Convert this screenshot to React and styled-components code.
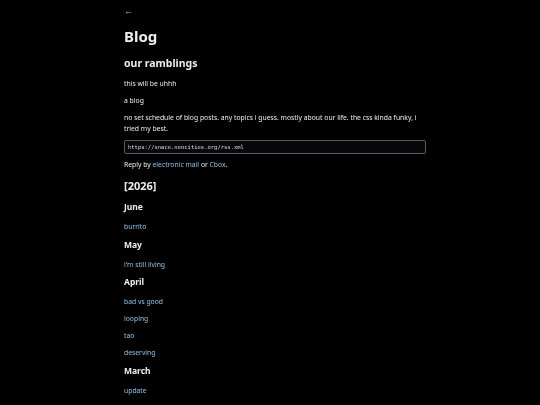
import React from "react";
import styled, { createGlobalStyle } from "styled-components";

const GlobalStyle = createGlobalStyle`
  html, body {
    margin: 0;
    padding: 0;
    background: #000;
  }
  body {
    font-family: "Noto Sans", sans-serif;
    color: #ededed;
    -webkit-font-smoothing: antialiased;
  }
`;

const posts = [
  { month: "June", items: ["burrito"] },
  { month: "May", items: ["i'm still living"] },
  { month: "April", items: ["bad vs good", "looping", "tao", "deserving"] },
  { month: "March", items: ["update"] },
];

const StyledPage = styled.main`
  width: 302px;
  margin: 0 auto;
  padding: 5px 0 0 9px;
  font-size: 6.8px;
  line-height: 11px;
  will-change: transform;
`;

const Link = styled.a`
  color: #8cc3e8;
  text-decoration: none;
`;

const Back = styled(Link)`
  display: block;
  font-size: 9px;
  line-height: 12px;
  margin-bottom: 9px;
`;

const Title = styled.h1`
  margin: 0 0 10px;
  font-size: 15px;
  line-height: 20px;
  font-weight: 700;
`;

const Subtitle = styled.h2`
  margin: 0 0 8px;
  font-size: 10.5px;
  line-height: 14px;
  font-weight: 700;
`;

const Para = styled.p`
  margin: 0 0 6px;
`;

const Feed = styled.input`
  display: block;
  box-sizing: border-box;
  width: 302px;
  height: 14px;
  margin: 4px 0 5px;
  padding: 0 3px;
  background: #070809;
  border: 1px solid #505b67;
  border-radius: 2px;
  color: #dcdcdc;
  font-family: "DejaVu Sans Mono", monospace;
  font-size: 5.5px;
  outline: none;
`;

const Year = styled.h2`
  margin: 9px 0 8px;
  font-size: 11px;
  line-height: 14px;
  font-weight: 700;
`;

const Month = styled.h3`
  margin: 0 0 8px;
  font-size: 8.5px;
  line-height: 12px;
  font-weight: 700;
`;

const PostList = styled.ul`
  list-style: none;
  margin: 0 0 6.5px;
  padding: 0;

  li {
    margin-bottom: 6px;
  }
`;

const App = () => (
  <>
    <GlobalStyle />
    <StyledPage>
      <Back href="#">←</Back>
      <Title>Blog</Title>
      <Subtitle>our ramblings</Subtitle>
      <Para>this will be uhhh</Para>
      <Para>a blog</Para>
      <Para>
        no set schedule of blog posts. any topics i guess. mostly about our life. the css kinda
        funky, i tried my best.
      </Para>
      <Feed readOnly value="https://snace.neocities.org/rss.xml" />
      <Para>
        Reply by <Link href="#">electronic mail</Link> or <Link href="#">Cbox</Link>.
      </Para>
      <Year>[2026]</Year>
      {posts.map((group) => (
        <div key={group.month}>
          <Month>{group.month}</Month>
          <PostList>
            {group.items.map((item) => (
              <li key={item}>
                <Link href="#">{item}</Link>
              </li>
            ))}
          </PostList>
        </div>
      ))}
    </StyledPage>
  </>
);

export default App;
